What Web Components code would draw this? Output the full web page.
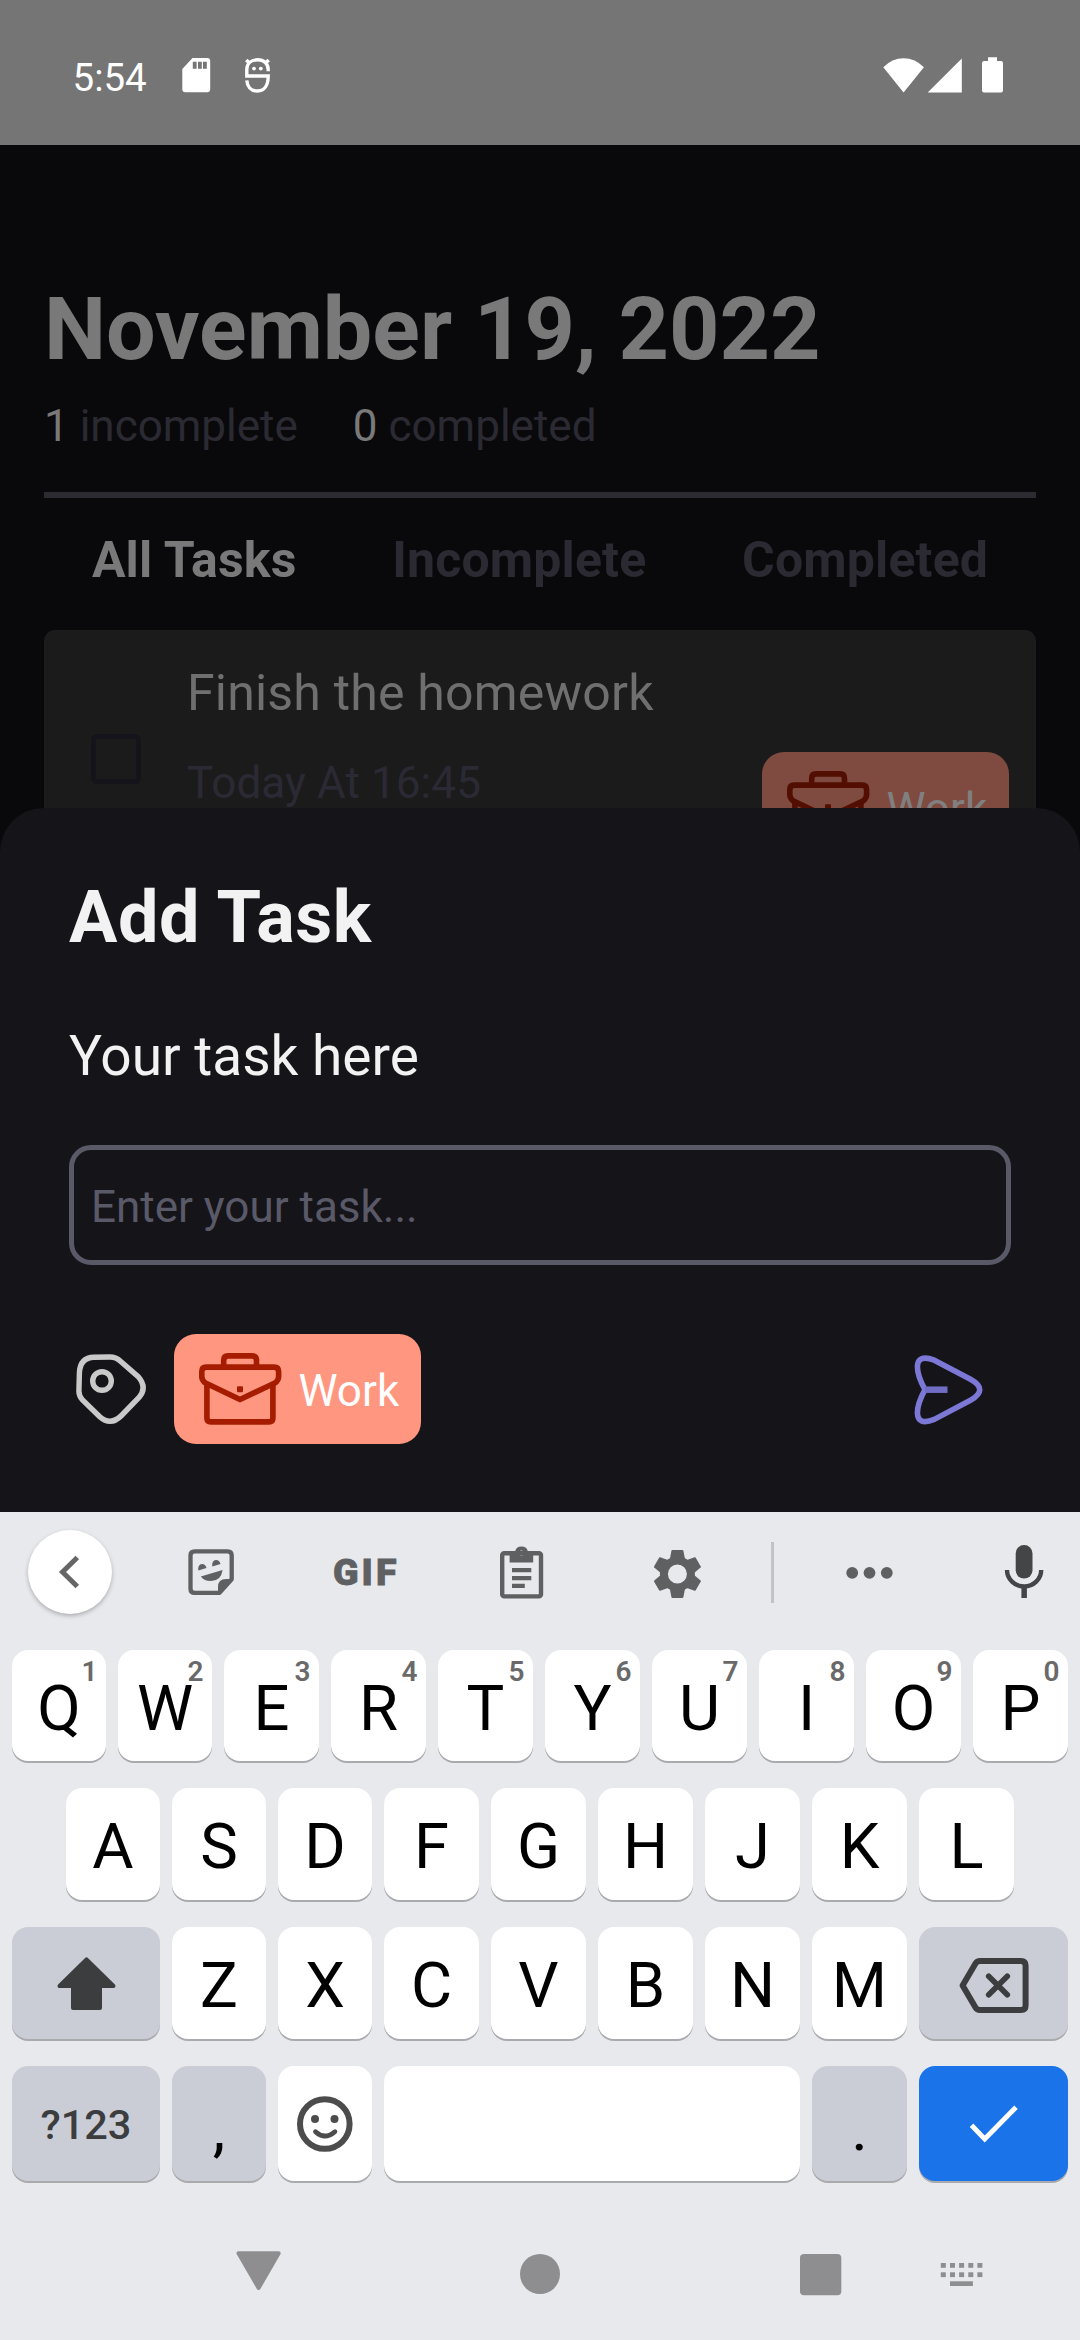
<!DOCTYPE html>
<html lang="en">
<head>
<meta charset="utf-8">
<title>Add Task</title>
<style>
  html, body { margin: 0; padding: 0; background: #09090b; }
  body { width: 1080px; height: 2340px; overflow: hidden; font-family: Roboto, "Liberation Sans", sans-serif; }
</style>
</head>
<body>
<todo-app></todo-app>
<script>
const define = (name, html, setup) => {
  const tpl = document.createElement('template');
  tpl.innerHTML = html;
  customElements.define(name, class extends HTMLElement {
    connectedCallback() {
      if (this.shadowRoot) return;
      this.attachShadow({ mode: 'open' }).appendChild(tpl.content.cloneNode(true));
      if (setup) setup(this, this.shadowRoot);
    }
  });
};

/* Each icon: view box, then markup drawn in currentColor. */
const ICONS = {
  sd: ['182 57 29 36', '<path fill-rule="evenodd" fill="currentColor" d="M192.5 58H207.2a3 3 0 0 1 3 3V89.2a3 3 0 0 1-3 3H185.3a3 3 0 0 1-3-3V69ZM192.8 61.8V68.8H196.6V61.8ZM198 61.8V68.8H201.8V61.8ZM203 61.8V68.8H206.8V61.8Z"/>'],
  debug: ['244 57 27 36', '<g fill="none" stroke="currentColor" stroke-width="3.4"><path d="M268.2 71.3V69.5C268.2 63.5 264 59.8 257.5 59.8S246.8 63.5 246.8 69.5V76H268.2C268.2 85 264.5 91 257.5 91S247.2 86 246.8 80.3"/><path d="M246.3 60L250 63.7M268.7 60L265 63.7"/></g><circle cx="254" cy="68.6" r="1.9" fill="currentColor"/><circle cx="260.8" cy="68.6" r="1.9" fill="currentColor"/>'],
  wifi: ['883 57 41 36', '<path fill="currentColor" d="M883.3 67.3Q892 58.3 903.6 58.3T923.9 67.3L903.6 92.4Z"/>'],
  signal: ['927 57 36 36', '<path fill="currentColor" d="M961.8 58.5V92.4H927.7Z"/>'],
  battery: ['981 57 23 36', '<path fill="currentColor" d="M988 57.3H997V61H1001a2 2 0 0 1 2 2V90.400a2 2 0 0 1-2 2H984a2 2 0 0 1-2-2V63a2 2 0 0 1 2-2H988Z"/>'],
  briefcase: ['199 1352 83 74', '<g fill="none" stroke="currentColor" stroke-width="5.6" stroke-linejoin="round"><path d="M240 1399.500L205.500 1383Q201.800 1380.500 201.800 1376.500V1371.500Q201.800 1367.100 206.200 1367.100H274.200Q278.600 1367.100 278.600 1371.500V1376.500Q278.600 1380.500 274.900 1383Z"/><path d="M206.900 1384V1418Q206.900 1421.900 210.800 1421.900H269Q272.900 1421.900 272.900 1418V1384"/><path d="M223.700 1366V1360.500Q223.700 1355.900 228 1355.900H252.200Q256.500 1355.900 256.500 1360.500V1366"/></g><rect x="237" y="1386.200" width="6" height="6" rx="1" fill="currentColor"/>'],
  tag: ['74 1352 74 76', '<g fill="none" stroke="currentColor" stroke-width="5.4"><path d="M78.900 1391L79.400 1373Q80 1357.600 94 1357.300L110 1357Q116 1357 120.500 1361.200L138.500 1377Q147.500 1387.500 139 1397.500L121.500 1415.500Q110.500 1426.500 99.500 1416.500L82.500 1400Q78.900 1396 78.900 1391Z"/><circle cx="102" cy="1381" r="9.300"/></g>'],
  send: ['912 1352 74 76', '<g fill="none" stroke="#7b78d6" stroke-width="5.600" stroke-linejoin="round"><path d="M925 1389.700Q917.400 1376 917.400 1366.500Q918 1354 934.300 1360.200L970.500 1379.300Q989 1389.700 970.500 1400.200L934.300 1419.400Q918 1426 917.400 1413Q917.400 1403.500 925 1389.700Z"/></g><path d="M925 1389.700H947.500" stroke="#706dc5" stroke-width="6.500"/>'],
  back: ['28 1530 84 84', '<path fill="none" stroke="currentColor" stroke-width="5" d="M77.300 1557.500L62.500 1572L77.300 1586.500"/>'],
  sticker: ['186 1542 50 60', '<path fill="none" stroke="currentColor" stroke-width="4.300" stroke-linejoin="round" d="M194.700 1551.400H227.500Q231.700 1551.400 231.700 1555.600V1579.300L219.500 1592.900H194.700Q190.500 1592.900 190.500 1588.700V1555.600Q190.500 1551.400 194.700 1551.400Z"/><path fill="currentColor" d="M218 1594V1587Q218 1579 226 1579H233ZM200.800 1576.500L222.600 1570Q221 1581 211 1581Q204 1581 200.800 1576.500ZM198.300 1570.600Q197.500 1564.500 202 1564Q205.500 1564 206.500 1568ZM212.300 1566.600Q211.500 1560.500 216 1560Q219.500 1560 220.500 1564Z"/>'],
  clipboard: ['498 1542 48 60', '<rect x="502.200" y="1553.200" width="38.800" height="43.200" rx="2" fill="none" stroke="currentColor" stroke-width="4.400"/><path fill="currentColor" fill-rule="evenodd" d="M509.600 1552H515A6.600 6.600 0 0 1 528 1552H533.200V1562.500H509.600ZM524 1553A2.600 2.600 0 1 0 518.800 1553A2.600 2.600 0 1 0 524 1553Z"/><path fill="currentColor" d="M512 1568H531.300V1572.200H512ZM512 1576H531.300V1580.200H512ZM512 1583.800H524.800V1588H512Z"/>'],
  gear: ['652 1542 52 60', '<g transform="translate(677.400 1574)"><circle r="13.500" fill="none" stroke="currentColor" stroke-width="8"/>' + [0,60,120,180,240,300].map(a => `<path transform="rotate(${a})" fill="currentColor" d="M-5.200-24H5.200L6-23.300L7.600-14.500H-7.600L-6-23.300Z"/>`).join('') + '</g>'],
  dots: ['844 1542 52 60', '<g fill="currentColor"><circle cx="852.200" cy="1572.800" r="5.900"/><circle cx="869.500" cy="1572.800" r="5.900"/><circle cx="886.800" cy="1572.800" r="5.900"/></g>'],
  mic: ['1002 1542 44 60', '<rect x="1015.700" y="1545" width="16.800" height="33.600" rx="8.400" fill="currentColor"/><path fill="none" stroke="currentColor" stroke-width="4.400" d="M1007 1570A17.100 16.500 0 0 0 1041.200 1570"/><path fill="currentColor" d="M1021.400 1586H1026.900V1598H1021.400Z"/>'],
  shift: ['54 1952 63 60', '<path fill="currentColor" stroke="currentColor" stroke-width="4" stroke-linejoin="round" d="M85.500 1958.300L58.500 1985H72V2007H99V1985H112.500Z"/>'],
  backspace: ['956 1952 74 62', '<g fill="none" stroke="currentColor" stroke-linejoin="round"><path stroke-width="6" d="M961.600 1985.500L974.500 1963.500Q976 1961 979 1961H1020Q1024.600 1961 1024.600 1965.500V2005.500Q1024.600 2010 1020 2010H979Q976 2010 974.500 2007.500Z"/><path stroke-width="5.600" stroke-linecap="round" d="M987.700 1976.200L1006.300 1994.800M1006.300 1976.200L987.700 1994.800"/></g>'],
  smile: ['296 2094 58 58', '<g fill="none" stroke="currentColor"><circle cx="324.800" cy="2123" r="24.800" stroke-width="6"/><path stroke-width="4.800" stroke-linecap="round" d="M315.500 2130.700Q324.800 2139.500 334.900 2130.700"/></g><circle cx="315" cy="2118" r="4" fill="currentColor"/><circle cx="334.500" cy="2118" r="4" fill="currentColor"/>'],
  check: ['964 2094 60 60', '<path fill="none" stroke="currentColor" stroke-width="4.900" d="M971.500 2125.300L984.700 2139L1016 2107.300"/>'],
  navBack: ['234 2248 50 50', '<path fill="currentColor" stroke="currentColor" stroke-width="4" stroke-linejoin="round" d="M238.500 2253.200H278.700L258.600 2288Z"/>'],
  navHome: ['515 2248 50 50', '<circle cx="540" cy="2274" r="20" fill="currentColor"/>'],
  navRecent: ['796 2248 50 50', '<rect x="800" y="2254" width="41.300" height="41.300" rx="4" fill="currentColor"/>'],
  navKeys: ['937 2248 50 50', '<g fill="currentColor">' + [2263, 2272.3].map(y => [940.8, 950, 959.1, 968.3, 977.4].map(x => `<rect x="${x}" y="${y}" width="5" height="4.800"/>`).join('')).join('') + '<rect x="950" y="2281.300" width="22.900" height="4.700"/></g>']
};

define('ui-icon', `<style>:host{display:block;flex:none}svg{display:block}</style>`, (el, root) => {
  const [box, body] = ICONS[el.getAttribute('name')];
  const [, , w, h] = box.split(' ');
  const holder = document.createElement('div');
  holder.innerHTML = `<svg width="${w}" height="${h}" viewBox="${box}">${body}</svg>`;
  root.appendChild(holder);
});

define('status-bar', `
<style>
  :host{display:flex;box-sizing:border-box;height:145px;padding:57px 76px 0 72.500px;background:#757575;color:#fff;align-items:flex-start}
  .time{font-size:38.500px;line-height:40px;margin-top:.5px;width:109.500px}
  .right{display:flex;margin-left:auto}
</style>
<span class="time">5:54</span>
<ui-icon name="sd"></ui-icon>
<ui-icon name="debug" style="margin-left:33px"></ui-icon>
<div class="right">
  <ui-icon name="wifi"></ui-icon>
  <ui-icon name="signal" style="margin-left:3px"></ui-icon>
  <ui-icon name="battery" style="margin-left:18px"></ui-icon>
</div>`);

define('category-chip', `
<style>
  :host{display:flex;flex:none;box-sizing:border-box;width:247px;height:110px;border-radius:22px;padding:18px 0 0 25px;background:#ff9680;color:#fff}
  ui-icon{color:#a51c00}
  span{font-size:44px;line-height:52px;margin:13px 0 0 16.500px}
  :host([dim]){background:#7f4b40;color:#808080}
  :host([dim]) ui-icon{color:#520e00}
</style>
<ui-icon name="briefcase"></ui-icon><span><slot></slot></span>`);

define('task-card', `
<style>
  :host{display:flex;align-items:flex-start;box-sizing:border-box;height:232px;padding:0 27px 0 47px;background:#1b1b1b;border-radius:11px 11px 0 0;overflow:hidden}
  .box{flex:none;box-sizing:border-box;width:50px;height:50px;margin-top:104px;border:5.500px solid #14141a;border-radius:6px}
  .info{margin:34px 0 0 46px;display:flex;flex-direction:column;gap:35px}
  .title{font-size:50px;line-height:58px;letter-spacing:.2px;color:#6f6f6f;white-space:nowrap}
  .due{font-size:44px;line-height:52px;letter-spacing:.1px;color:#2b2a34}
  category-chip{margin:122px 0 0 auto}
</style>
<div class="box"></div>
<div class="info">
  <div class="title"><slot name="title"></slot></div>
  <div class="due"><slot name="due"></slot></div>
</div>
<category-chip dim>Work</category-chip>`);

define('task-screen', `
<style>
  :host{display:block;box-sizing:border-box;height:663px;padding:132px 44px 0;overflow:hidden;background:#09090b}
  h1{margin:0;font-size:88px;line-height:104px;font-weight:700;color:#797979;white-space:nowrap}
  .stats{display:flex;gap:55px;margin-top:19px;font-size:44px;line-height:52px;color:#2b2a33}
  b{font-weight:400;color:#797979}
  .rule{height:6px;margin-top:40px;background:#2b2b31}
  .tabs{display:flex;justify-content:space-around;margin:33px 0 41px;font-size:50px;line-height:58px;letter-spacing:.15px;font-weight:700;color:#2b2a33}
  .on{color:#797979}
</style>
<h1>November 19, 2022</h1>
<div class="stats"><span><b>1</b> incomplete</span><span><b>0</b> completed</span></div>
<div class="rule"></div>
<div class="tabs"><span class="on">All Tasks</span><span>Incomplete</span><span>Completed</span></div>
<task-card><span slot="title">Finish the homework</span><span slot="due">Today At 16:45</span></task-card>`);

define('add-task-sheet', `
<style>
  :host{display:block;box-sizing:border-box;height:704px;padding:68px 69px 0;background:#151419;border-radius:44px 44px 0 0;color:#f2f2f2}
  h2{margin:0;font-size:72px;line-height:84px;letter-spacing:.5px;font-weight:700}
  .label{margin-top:64px;font-size:55px;line-height:64px}
  .field{box-sizing:border-box;height:120px;margin-top:57px;border:5.500px solid #5a5968;border-radius:22px;padding:31px 17px 0;font-size:44px;line-height:52px;color:#5a5968}
  .row{display:flex;align-items:flex-start;margin-top:69px}
  ui-icon[name=tag]{margin:18px 0 0 5px;color:#c9c9c9}
  category-chip{margin-left:26px}
  ui-icon[name=send]{margin:18px 25px 0 auto}
</style>
<h2>Add Task</h2>
<div class="label">Your task here</div>
<div class="field">Enter your task...</div>
<div class="row"><ui-icon name="tag"></ui-icon><category-chip>Work</category-chip><ui-icon name="send"></ui-icon></div>`);

define('key-cap', `
<style>
  :host{position:relative;display:flex;min-width:0;box-sizing:border-box;justify-content:center;align-items:center;background:#fff;border-radius:16px;box-shadow:0 2px 0 #a9aaad;color:#000;font-size:63.300px;line-height:74px}
  :host([fn]){background:#cbcdd6;color:#3c3d3f}
  :host([punct]){color:#000}
  :host([soft]){color:#4c4c4d}
  :host([go]){background:#1a73e8;color:#fff}
  :host([text]){font-size:41.500px;font-weight:500}
  .main{margin-top:var(--drop,4px)}
  :host([icon]) .main{margin-top:0}
  .hint{position:absolute;right:8.500px;top:5.500px;font-size:28px;line-height:32px;font-weight:600;color:#69696a}
</style>
<span class="main"><slot></slot></span>`, (el, root) => {
  const hint = el.getAttribute('hint');
  if (hint !== null) {
    const s = document.createElement('span');
    s.className = 'hint';
    s.textContent = hint;
    root.appendChild(s);
  }
});

define('soft-keyboard', `
<style>
  :host{display:block;box-sizing:border-box;height:828px;background:#e8e9ed;color:#5f6062}
  .tools{display:flex;height:138px;box-sizing:border-box;padding:30px 34px 0 28px}
  .back{width:84px;height:84px;flex:none;margin-top:-12px;border-radius:50%;background:#fff;color:#666;box-shadow:0 2px 4px rgba(0,0,0,.25)}
  .gif{font-weight:900;font-size:37.500px;line-height:44px;letter-spacing:3px;width:66px;margin:7.500px 0 0 97px;white-space:nowrap;-webkit-text-stroke:.8px currentColor}
  .sep{width:2.500px;height:61px;margin-left:67px;background:#c1c3c7}
  .row{display:grid;column-gap:12px;padding:0 12px;margin-bottom:27px;height:112px}
  .row.one{height:111px;grid-template-columns:94px 94px repeat(8,95px)}
  .row.two{padding:0 66px;grid-template-columns:repeat(3,94px) repeat(6,95px)}
  .row.three{grid-template-columns:148px 94px 94px repeat(5,95px) 149px}
  .row.four{height:115px;margin:0;grid-template-columns:148px 94px 94px 416px 95px 149px}
  .nav{display:flex;padding:67px 93px 0 234px;color:#8e8e90}
</style>
<div class="tools">
  <ui-icon class="back" name="back"></ui-icon>
  <ui-icon name="sticker" style="margin-left:74px"></ui-icon>
  <span class="gif">GIF</span>
  <ui-icon name="clipboard" style="margin-left:99px"></ui-icon>
  <ui-icon name="gear" style="margin-left:106px"></ui-icon>
  <div class="sep"></div>
  <ui-icon name="dots" style="margin-left:70.500px"></ui-icon>
  <ui-icon name="mic" style="margin-left:106px;color:#444547"></ui-icon>
</div>
<div class="row one"></div>
<div class="row two"></div>
<div class="row three"></div>
<div class="row four">
  <key-cap fn text style="--drop:3px">?123</key-cap>
  <key-cap fn punct style="--drop:8px">,</key-cap>
  <key-cap icon soft><ui-icon name="smile"></ui-icon></key-cap>
  <key-cap></key-cap>
  <key-cap fn punct style="--drop:8px">.</key-cap>
  <key-cap go icon><ui-icon name="check"></ui-icon></key-cap>
</div>
<div class="nav">
  <ui-icon name="navBack"></ui-icon>
  <ui-icon name="navHome" style="margin-left:231px"></ui-icon>
  <ui-icon name="navRecent" style="margin-left:231px"></ui-icon>
  <ui-icon name="navKeys" style="margin-left:91px"></ui-icon>
</div>`, (el, root) => {
  const caps = (s, hints) => [...s].map((c, i) => `<key-cap${hints ? ` hint="${hints[i]}"` : ''}>${c}</key-cap>`).join('');
  root.querySelector('.one').innerHTML = caps('QWERTYUIOP', '1234567890');
  root.querySelector('.two').innerHTML = caps('ASDFGHJKL');
  root.querySelector('.three').innerHTML =
    '<key-cap fn icon><ui-icon name="shift"></ui-icon></key-cap>' + caps('ZXCVBNM') +
    '<key-cap fn icon><ui-icon name="backspace"></ui-icon></key-cap>';
});

define('todo-app', `
<style>:host{display:flex;flex-direction:column;width:1080px;height:2340px;overflow:hidden}
:host>*{flex:none}
status-bar,task-screen,add-task-sheet,soft-keyboard{flex:none}</style>
<status-bar></status-bar>
<task-screen></task-screen>
<add-task-sheet></add-task-sheet>
<soft-keyboard></soft-keyboard>`);
</script>
</body>
</html>
